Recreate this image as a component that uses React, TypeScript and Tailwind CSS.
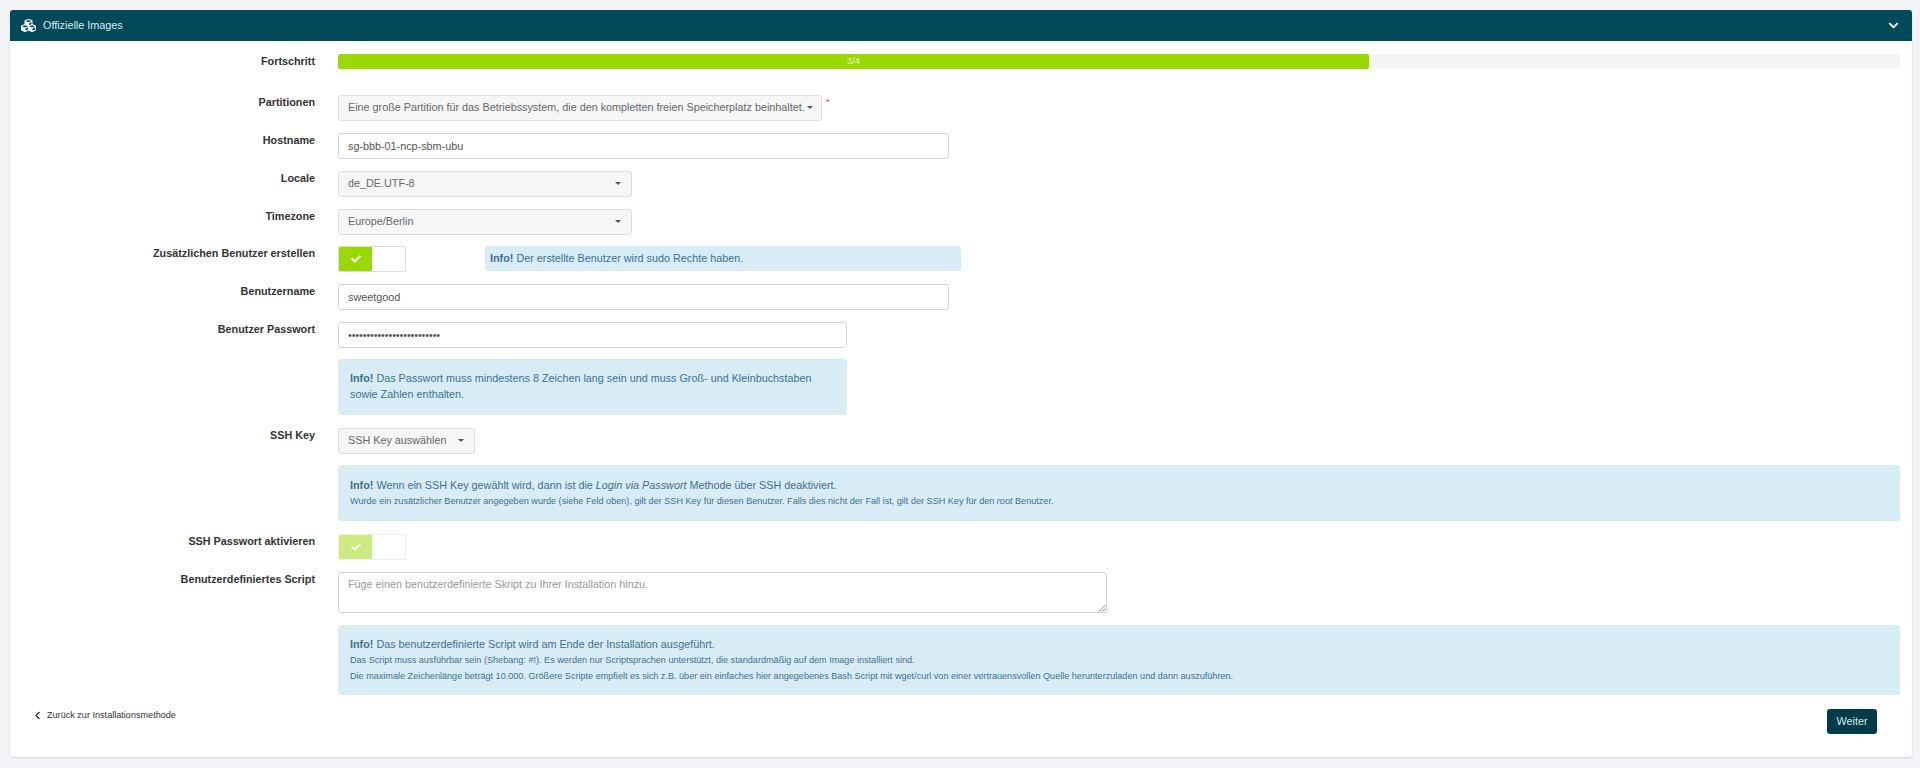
import { ReactNode } from "react";
import { FaCheck, FaChevronDown, FaChevronLeft, FaCubes } from "react-icons/fa";

function Caret() {
  return <span className="ml-0.5 inline-block h-0 w-0 shrink-0 border-x-[3px] border-t-[3px] border-x-transparent border-t-[#555]" />;
}

function Field({ label, children, className = "mb-3" }: { label?: string; children: ReactNode; className?: string }) {
  return (
    <div className={`flex ${className}`}>
      <label className="w-[305px] shrink-0 text-right text-[10.8px] leading-[15px] font-bold text-[#333]">{label}</label>
      <div className="ml-[23px] min-w-0 flex-1">{children}</div>
    </div>
  );
}

function Select({ children, className }: { children: ReactNode; className: string }) {
  return (
    <div className={`flex h-[26px] items-center justify-between rounded-[3px] border border-[#ddd] bg-[#f6f6f6] pb-px pl-[9px] pr-[10px] text-[10.8px] whitespace-nowrap text-[#666] ${className}`}>
      <span>{children}</span>
      <Caret />
    </div>
  );
}

function Input({ value, className }: { value: string; className: string }) {
  return (
    <div className={`flex h-[26px] items-center rounded-[3px] border border-[#d5d5d5] bg-white px-[9px] text-[10.8px] text-[#555] ${className}`}>
      {value}
    </div>
  );
}

function Toggle({ disabled }: { disabled?: boolean }) {
  return (
    <div className={`flex h-[26px] w-[68px] overflow-hidden rounded-[2px] border border-[#ddd] bg-white ${disabled ? "opacity-50" : ""}`}>
      <div className="flex w-[33px] items-center justify-center bg-[#99d800] pb-px text-white">
        <FaCheck className="text-[10px]" />
      </div>
    </div>
  );
}

function Alert({ children, className = "" }: { children: ReactNode; className?: string }) {
  return <div className={`rounded-[3px] bg-[#d8ecf6] px-3 py-3 text-[10.8px] leading-4 text-[#3b7190] ${className}`}>{children}</div>;
}

export default function App() {
  return (
    <div className="min-h-[768px] bg-[#f2f4f8] p-[10px] pr-2 font-['Liberation_Sans',Arial,sans-serif]">
      <div className="h-[747px] rounded-[3px] bg-white shadow-[0_1px_2px_rgba(0,0,0,0.15)]">
        <div className="flex h-[31px] items-center justify-between rounded-t-[3px] bg-[#004a5a] pl-[11px] pr-[13px] text-white">
          <div className="flex items-center text-[10.8px] text-[#dcebef]">
            <FaCubes className="mr-[7px] text-[15px] text-white" />
            Offizielle Images
          </div>
          <FaChevronDown className="text-[11px]" />
        </div>

        <div className="pr-3 pt-[13px]">
          <Field label="Fortschritt" className="mb-[26px]">
            <div className="h-[15px] overflow-hidden rounded-[2px] bg-[#f5f5f5]">
              <div className="flex h-full w-[66%] items-center justify-center rounded-[2px] bg-[#99d800] text-[9.5px] text-[#eef6d0]">3/4</div>
            </div>
          </Field>

          <Field label="Partitionen">
            <div className="flex">
              <Select className="w-[484px]">Eine große Partition für das Betriebssystem, die den kompletten freien Speicherplatz beinhaltet.</Select>
              <span className="ml-1 pt-px text-[9px] text-[#e33]">*</span>
            </div>
          </Field>
          <Field label="Hostname">
            <Input value="sg-bbb-01-ncp-sbm-ubu" className="w-[611px]" />
          </Field>
          <Field label="Locale">
            <Select className="w-[294px]">de_DE.UTF-8</Select>
          </Field>
          <Field label="Timezone" className="mb-[11px]">
            <Select className="w-[294px]">Europe/Berlin</Select>
          </Field>
          <Field label="Zusätzlichen Benutzer erstellen">
            <div className="flex">
              <Toggle />
              <div className="ml-[79px] flex h-[25px] w-[476px] items-center rounded-[3px] bg-[#d8ecf6] px-[5px] text-[10.8px] text-[#3b7190]">
                <span>
                  <strong>Info!</strong> Der erstellte Benutzer wird sudo Rechte haben.
                </span>
              </div>
            </div>
          </Field>
          <Field label="Benutzername">
            <Input value="sweetgood" className="w-[611px]" />
          </Field>
          <Field label="Benutzer Passwort" className="mb-[11px]">
            <Input value="•••••••••••••••••••••••••" className="w-[509px] tracking-[-0.1px]" />
          </Field>
          <Field className="mb-[13px]">
            <Alert className="w-[509px] pb-[13px] pt-[11px]">
              <strong>Info!</strong> Das Passwort muss mindestens 8 Zeichen lang sein und muss Groß- und Kleinbuchstaben sowie Zahlen enthalten.
            </Alert>
          </Field>
          <Field label="SSH Key" className="mb-[11px]">
            <Select className="w-[137px]">SSH Key auswählen</Select>
          </Field>
          <Field className="mb-[13px]">
            <Alert>
              <div>
                <strong>Info!</strong> Wenn ein SSH Key gewählt wird, dann ist die <em>Login via Passwort</em> Methode über SSH deaktiviert.
              </div>
              <div className="text-[9.1px]">
                Wurde ein zusätzlicher Benutzer angegeben wurde (siehe Feld oben), gilt der SSH Key für diesen Benutzer. Falls dies nicht der Fall ist, gilt der SSH Key für den <em>root</em> Benutzer.
              </div>
            </Alert>
          </Field>
          <Field label="SSH Passwort aktivieren">
            <Toggle disabled />
          </Field>
          <Field label="Benutzerdefiniertes Script">
            <div className="relative h-[41px] w-[769px] rounded-[3px] border border-[#d5d5d5] bg-white px-[9px] py-[3px] text-[10.8px] leading-4 text-[#999]">
              Füge einen benutzerdefinierte Skript zu Ihrer Installation hinzu.
              <svg className="absolute bottom-0 right-0" width="8" height="8" viewBox="0 0 8 8">
                <path d="M7.5 1 1 7.5M7.5 4.5 4.5 7.5" stroke="#888" strokeWidth="1" fill="none" />
              </svg>
            </div>
          </Field>
          <Field className="mb-[14px]">
            <Alert className="py-[11px]">
              <div>
                <strong>Info!</strong> Das benutzerdefinierte Script wird am Ende der Installation ausgeführt.
              </div>
              <div className="text-[9.1px]">Das Script muss ausführbar sein (Shebang: #!). Es werden nur Scriptsprachen unterstützt, die standardmäßig auf dem Image installiert sind.</div>
              <div className="text-[9.1px]">Die maximale Zeichenlänge beträgt 10.000. Größere Scripte empfielt es sich z.B. über ein einfaches hier angegebenes Bash Script mit wget/curl von einer vertrauensvollen Quelle herunterzuladen und dann auszuführen.</div>
            </Alert>
          </Field>

          <div className="flex items-start justify-between pl-[23px] pr-[23px]">
            <div className="flex items-center text-[9.1px] leading-[13px] text-[#333]">
              <FaChevronLeft className="mr-[5px] text-[9px]" />
              Zurück zur Installationsmethode
            </div>
            <button className="h-[25px] w-[50px] rounded-[3px] bg-[#003b4a] text-[10.8px] text-[#d8e8ec]">Weiter</button>
          </div>
        </div>
      </div>
    </div>
  );
}
